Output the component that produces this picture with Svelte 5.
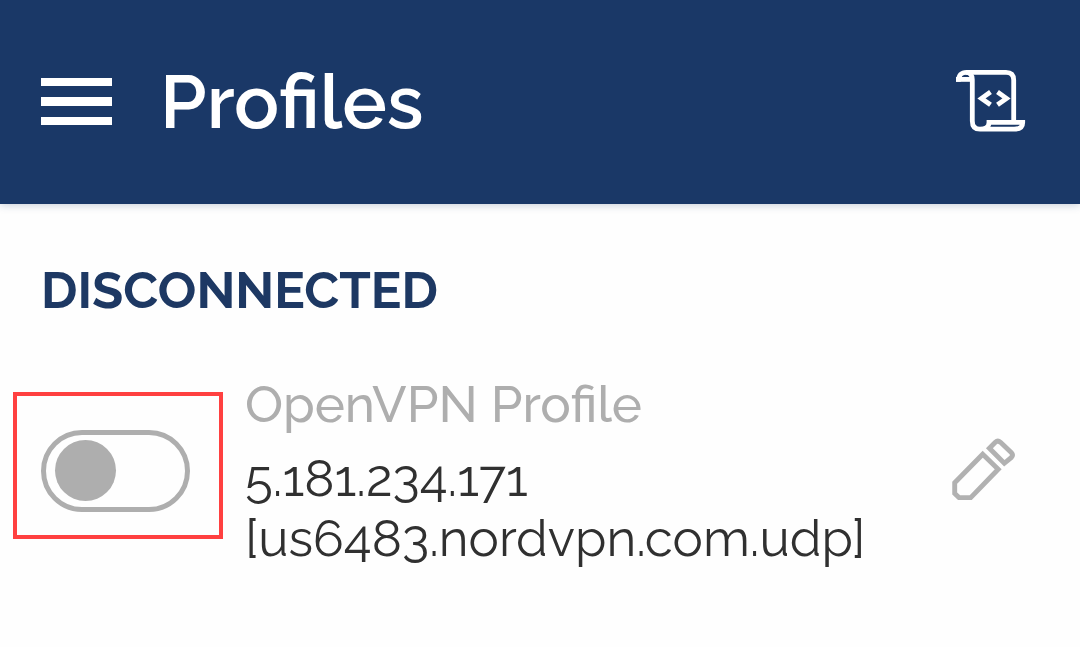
<script lang="ts">
  let connected = $state(false);

  const profile = {
    name: 'OpenVPN Profile',
    ip: '5.181.234.171',
    host: '[us6483.nordvpn.com.udp]',
  };
</script>

<header class="toolbar">
  <button class="icon-button" aria-label="Open menu">
    <svg width="71" height="48" viewBox="0 0 71 48" fill="currentColor">
      <rect y="0" width="71" height="8" />
      <rect y="19" width="71" height="9" />
      <rect y="39" width="71" height="8" />
    </svg>
  </button>
  <h1>Profiles</h1>
  <button class="icon-button" aria-label="Show log">
    <svg width="70" height="66" viewBox="0 0 70 66" fill="none" stroke="currentColor" stroke-width="4.8">
      <path d="M2.4 12.7C2.4 6 5.5 3.3 10.5 3.3H50Q57.7 3.3 57.7 11V53" />
      <path d="M10 3.3C14 3.3 16.3 6 16.3 10.5V52C16.3 57.5 19 60.2 24 60.2H58C63.5 60.2 66.7 58 66.7 53.4H33C33 58 29 60.2 24 60.2" />
      <path d="M0 10.4H16" />
      <path d="M34.5 23L25.5 29.4L34.5 35.8M41.5 23L50.5 29.4L41.5 35.8" />
    </svg>
  </button>
</header>

<main>
  <h2>{connected ? 'Connected' : 'Disconnected'}</h2>

  <section class="profile">
    <div class="highlight">
      <input type="checkbox" role="switch" class="switch" aria-label="Connect {profile.name}" bind:checked={connected} />
    </div>
    <div class="details">
      <h3>{profile.name}</h3>
      <p>{profile.ip}<br />{profile.host}</p>
    </div>
    <button class="icon-button edit" aria-label="Edit profile">
      <svg width="65" height="68" viewBox="0 0 65 68" fill="none" stroke="currentColor" stroke-width="4.9">
        <path d="M3.7 45.8L31.7 17.3L47.2 32.3L19.7 60.6H8L3.7 56.5Z" />
        <path d="M38.4 11.2L44.3 5.3Q46.8 3 49.5 5.3L60.2 15.4Q62.6 18 60.4 20.4L53.3 26.3Z" />
      </svg>
    </button>
  </section>
</main>

<style>
  :global(body) {
    margin: 0;
    background: #fefefe;
    font-family: Raleway, Lato, sans-serif;
  }

  h1, h2, h3, p {
    margin: 0;
  }

  .toolbar {
    display: flex;
    align-items: center;
    height: 204px;
    padding: 0 54px 0 41px;
    box-sizing: border-box;
    background: #1a3867;
    box-shadow: 0 1px 8px rgba(26, 56, 103, 0.25);
    color: #fff;
  }

  .icon-button {
    display: flex;
    padding: 0;
    border: 0;
    background: none;
    color: inherit;
    cursor: pointer;
  }

  h1 {
    flex: 1;
    margin-left: 48px;
    font-size: 75px;
    font-weight: 600;
    line-height: 88px;
  }

  h2 {
    padding: 56px 41px 0;
    color: #1d3863;
    font-size: 51px;
    font-weight: 700;
    line-height: 60px;
    text-transform: uppercase;
  }

  .profile {
    display: flex;
    align-items: center;
    padding: 54px 64px 64px 13px;
  }

  .highlight {
    display: flex;
    margin-bottom: 12px;
    padding: 34px 29px 23px 24px;
    border: 4px solid #ff4040;
  }

  .switch {
    appearance: none;
    display: flex;
    align-items: center;
    width: 149px;
    height: 82px;
    margin: 0;
    padding: 0 9px;
    box-sizing: border-box;
    border: 5px solid #aeaeae;
    border-radius: 41px;
    cursor: pointer;
  }

  .switch::before {
    content: '';
    width: 61px;
    height: 61px;
    border-radius: 50%;
    background: #aeaeae;
  }

  .switch:checked {
    justify-content: flex-end;
  }

  .details {
    flex: 1;
    margin-left: 22px;
    color: #303030;
    font-size: 51px;
    line-height: 60px;
  }

  h3 {
    margin-bottom: 14px;
    color: #aeaeae;
    font-size: 51px;
    font-weight: 500;
  }

  .edit {
    color: #b1b1b1;
  }
</style>
